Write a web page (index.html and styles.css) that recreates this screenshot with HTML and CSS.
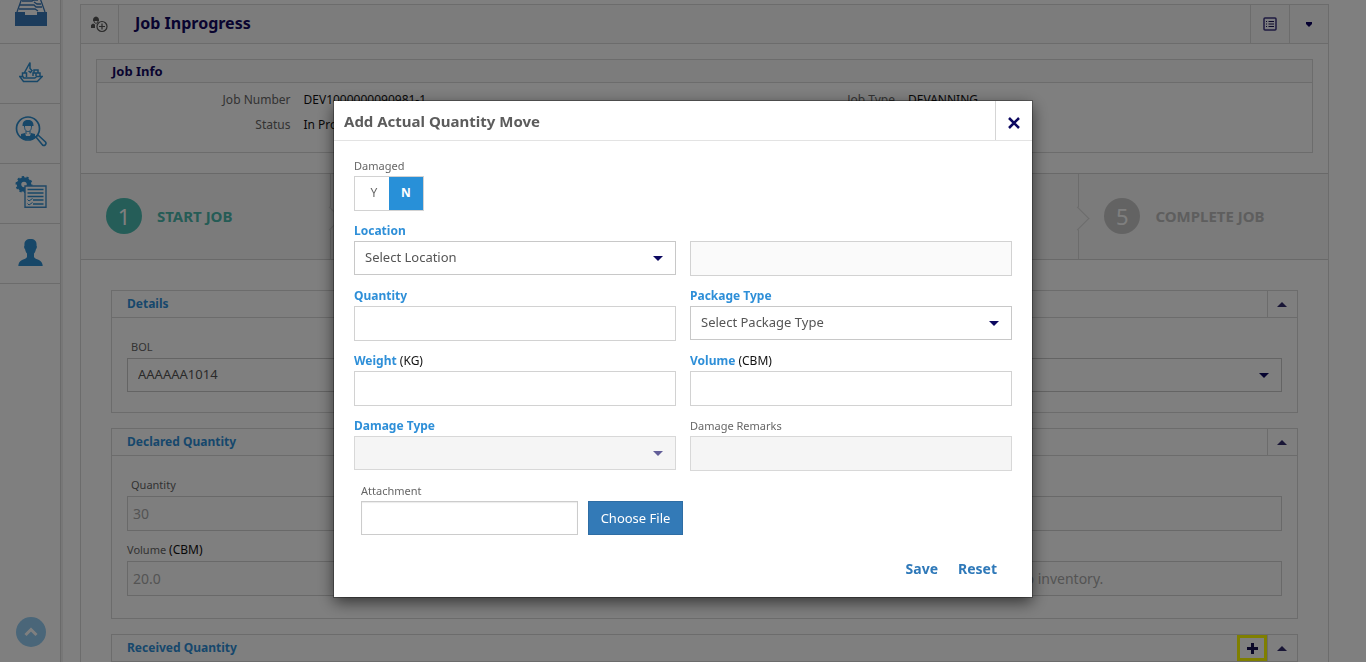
FILE: index.html
```html
<!DOCTYPE html>
<html lang="en">
<head>
<meta charset="utf-8">
<title>Job Inprogress</title>
<link rel="stylesheet" href="styles.css">
</head>
<body>
<div class="app">
  <nav class="sidebar" aria-label="Main">
    <a class="nav-item nav-first" href="#" aria-label="Inbox">
      <svg width="32" height="32" viewBox="0 0 32 32"><g fill="none" stroke="#3878b8" stroke-width="1.3"><path d="M8 3h16M7 7h10l2-1h4M5 11h14l2 2h6M4 15h16l3 2M2 18L7 4M30 18L25 4M19 8l3 2h4"/></g><path fill="#3878b8" d="M0 18h10v3h12v-3h10v14H0z"/></svg>
    </a>
    <a class="nav-item" href="#" aria-label="Vessels">
      <svg width="24" height="22" viewBox="0 0 24 22" fill="none" stroke="#2e8fd0" stroke-width="1.5"><path d="M.8 15.500h3l1 1.500h11l2-1.500h5.500l-5 5H4.500zM3.500 15v-3h4v4M5.500 11.500L11 1.500v6l2 2-1.500 2-2-1.500M14 15v-3h3v3M17 12h4v3M15 12V9h4v3"/></svg>
    </a>
    <a class="nav-item" href="#" aria-label="Find worker">
      <svg width="32" height="32" viewBox="0 0 32 32"><circle cx="13" cy="12.500" r="11.500" fill="none" stroke="#2e8fd0" stroke-width="1.700"/><path d="M21 21l2-2 7.500 7c1.500 2-1 4.500-3 3z" fill="none" stroke="#2e8fd0" stroke-width="1.600"/><path fill="#2e8fd0" d="M7.500 9c0-3 2-4.500 4-5h3c2 .5 4 2 4 5v1h-11zM6 22v-4l4-1 1 3h4l1-3 4 1v4l-3 1.500H9z"/><path d="M9.500 10c0 4 1.500 5.500 3.500 5.500s3.500-1.500 3.500-5.500M11 15v3M15 15v3" fill="none" stroke="#2e8fd0"/></svg>
    </a>
    <a class="nav-item" href="#" aria-label="Job settings">
      <svg width="32" height="32" viewBox="0 0 32 32"><circle cx="9" cy="8.500" r="5" fill="none" stroke="#2e8fd0" stroke-width="4.500"/><circle cx="9" cy="8.500" r="7.500" fill="none" stroke="#2e8fd0" stroke-width="2" stroke-dasharray="2.350 2.350"/><path d="M10 10h21v21.300H10z" fill="#fff" stroke="#3f8fcc" stroke-width="1.400"/><path d="M12.500 13.500h16M12.500 17h16M12.500 20.500h16M18 24h10.500M18 28h10.500" stroke="#2e8fd0" stroke-width="1.300"/><path d="M12.500 23.500l1.500 1.500 3.500-2.500M12.500 27.500L14 29l3.500-2.500" fill="none" stroke="#2e8fd0"/></svg>
    </a>
    <a class="nav-item" href="#" aria-label="Profile">
      <svg width="25" height="27" viewBox="0 0 25 27" fill="#2e8fd0"><path d="M12.500 0C17 0 19 2.500 18.500 6.500c.7.500.4 3-.5 3.500-.5 2.500-1 3.500-2 4.500v3.500c1.500 3 7.500 2 8.500 7.500l.2 1.500H.3l.2-1.500C1.500 20 7.500 21 9 18v-3.500C8 13.500 7.500 12.500 7 10c-.9-.5-1.200-3-.5-3.500C6 2.500 8 0 12.500 0z"/></svg>
    </a>
    <button class="to-top" type="button" aria-label="Back to top">
      <svg width="14" height="10" viewBox="0 0 14 10" fill="none" stroke="#fff" stroke-width="3"><path d="M1.500 8L7 2.500 12.500 8"/></svg>
    </button>
  </nav>

  <main class="page">
    <header class="page-head">
      <span class="page-icon">
        <svg width="17" height="17" viewBox="0 0 17 17"><path fill="#555" d="M2 4c0-2 1-3 3-3.500C7 1 8 2 8 4v1H2zM0 9l2-1.500 2 1v3.500H0z"/><path d="M3 5c0 3 4 3 4 0" fill="none" stroke="#555"/><circle cx="11" cy="10.500" r="5" fill="#f8f8f8" stroke="#555" stroke-width="1.200"/><path d="M11 7.500v6M8 10.500h6" stroke="#555" stroke-width="1.200"/></svg>
      </span>
      <h1>Job Inprogress</h1>
      <button class="head-btn" type="button" aria-label="List view">
        <svg width="14" height="14" viewBox="0 0 14 14"><rect x="1" y="1" width="12" height="12" rx="1" fill="#f7f7ff" stroke="#3c3480" stroke-width="1.500"/><path d="M3 4.500h1M3 7h1M3 9.500h1M5.500 4.500H11M5.500 7H11M5.500 9.500H11" stroke="#191050"/></svg>
      </button>
      <button class="head-btn" type="button" aria-label="More"><svg width="6" height="5" viewBox="0 0 6 5" fill="#0a0060"><path d="M0 0h6v2L3 5 0 2z"/></svg></button>
    </header>

    <section class="job-info">
      <h2>Job Info</h2>
      <dl>
        <dt>Job Number</dt><dd>DEV1000000090981-1</dd>
        <dt>Job Type</dt><dd>DEVANNING</dd>
        <dt>Status</dt><dd>In Progress</dd>
      </dl>
    </section>

    <ol class="steps">
      <li class="step done"><span class="num">1</span>START JOB</li>
      <li class="step"></li>
      <li class="step"></li>
      <li class="step"></li>
      <li class="step"><span class="num">5</span>COMPLETE JOB</li>
    </ol>

    <div class="panels">
      <section class="panel">
        <header><h3>Details</h3><button type="button" aria-label="Collapse"><i class="up"></i></button></header>
        <div class="panel-body">
          <div class="field indent"><label for="bol">BOL</label><span class="pick"><select id="bol"><option>AAAAAA1014</option></select></span></div>
          <div class="field"><span class="label"></span><span class="pick"><select aria-label="Detail"><option></option></select></span></div>
        </div>
      </section>
      <section class="panel">
        <header><h3>Declared Quantity</h3><button type="button" aria-label="Collapse"><i class="up"></i></button></header>
        <div class="panel-body">
          <div class="field indent"><label for="dq">Quantity</label><input id="dq" value="30" disabled></div>
          <div class="field"><span class="label"></span><input aria-label="Weight" disabled></div>
          <div class="field"><label for="dv">Volume <b>(CBM)</b></label><input id="dv" value="20.0" disabled></div>
          <div class="field remarks"><span class="label"></span><input aria-label="Remarks" value="to inventory." disabled></div>
        </div>
      </section>
      <section class="panel">
        <header><h3>Received Quantity</h3><button class="add" type="button" aria-label="Add"><svg width="11" height="11" viewBox="0 0 11 11"><path d="M5.500 0v11M0 5.500h11" stroke="#150f50" stroke-width="3"/></svg></button><button type="button" aria-label="Collapse"><i class="up"></i></button></header>
        <div class="panel-body"></div>
      </section>
    </div>
  </main>
</div>

<div class="backdrop">
  <form class="modal" role="dialog" aria-labelledby="modal-title">
    <header class="modal-head">
      <h2 id="modal-title">Add Actual Quantity Move</h2>
      <button type="button" aria-label="Close"><svg width="12" height="12" viewBox="0 0 12 12"><path d="M1 1l10 10M11 1L1 11" stroke="#0c0860" stroke-width="2.500"/></svg></button>
    </header>
    <div class="modal-body">
      <fieldset class="field wide">
        <legend>Damaged</legend>
        <div class="toggle">
          <label><input type="radio" name="damaged"><span>Y</span></label>
          <label><input type="radio" name="damaged" checked><span>N</span></label>
        </div>
      </fieldset>
      <div class="field req"><label for="loc">Location</label><span class="pick"><select id="loc"><option>Select Location</option></select></span></div>
      <div class="field"><span class="label"></span><input class="readonly" aria-label="Location details" readonly></div>
      <div class="field req"><label for="qty">Quantity</label><input id="qty"></div>
      <div class="field req"><label for="pkg">Package Type</label><span class="pick"><select id="pkg"><option>Select Package Type</option></select></span></div>
      <div class="field req"><label for="wt">Weight <b>(KG)</b></label><input id="wt"></div>
      <div class="field req"><label for="vol">Volume <b>(CBM)</b></label><input id="vol"></div>
      <div class="field req"><label for="dt">Damage Type</label><span class="pick off"><select id="dt" disabled><option></option></select></span></div>
      <div class="field"><label for="dr">Damage Remarks</label><input id="dr" class="off" disabled></div>
      <div class="field wide attach"><label for="att">Attachment</label>
        <div class="file-row"><input id="att"><button type="button">Choose File</button></div>
      </div>
    </div>
    <footer class="modal-foot"><button type="submit">Save</button><button type="reset">Reset</button></footer>
  </form>
</div>
</body>
</html>
```
FILE: styles.css
```css
* { box-sizing: border-box; }
body, h1, h2, h3, dl, dd, ol, fieldset { margin: 0; padding: 0; }
body {
  font: 12px/20px Tahoma, "Noto Sans", sans-serif;
  color: #666;
  background: #fff;
  overflow: hidden;
}
button, input, select { font-family: inherit; margin: 0; border-radius: 0; }
button { padding: 0; border: 0; background: none; display: flex; align-items: center; justify-content: center; }
b { font-size: 12px; font-weight: 400; color: #111; }

.app { display: flex; height: 100vh; overflow: hidden; background: #fff; }

/* Sidebar */
.sidebar {
  flex: 0 0 63px;
  display: flex;
  flex-direction: column;
  align-items: stretch;
  border-right: 2px solid #efefef;
  box-shadow: inset -1px 0 #d4d4d4;
}
.nav-item {
  flex: 0 0 60px;
  display: flex;
  align-items: center;
  justify-content: center;
  padding-bottom: 3px;
  border-bottom: 1px solid #d8d8d8;
}
.nav-first { flex-basis: 44px; align-items: flex-end; padding-bottom: 17px; overflow: hidden; }
.to-top {
  width: 30px;
  height: 30px;
  margin: auto auto 15px;
  border-radius: 50%;
  background: #95cdf2;
}

/* Page */
.page {
  flex: 1;
  margin: 4px 37px 0 17px;
  border: 1px solid #d8d8d8;
  border-bottom: 0;
  display: flex;
  flex-direction: column;
}
.page-head {
  display: flex;
  flex: 0 0 39px;
  background: #f8f8f8;
  border-bottom: 1px solid #d8d8d8;
}
.page-icon { width: 38px; border-right: 1px solid #d8d8d8; display: flex; align-items: center; justify-content: center; }
.page-head h1 { flex: 1; padding-left: 16px; font-size: 16px; line-height: 37px; color: #130860; }
.head-btn { width: 39px; border-left: 1px solid #d8d8d8; }

.job-info { margin: 15px 15px 20px; border: 1px solid #d8d8d8; }
.job-info h2 {
  padding-left: 15px;
  font-size: 13px;
  line-height: 22px;
  color: #130860;
  background: #f8f8f8;
  border-bottom: 1px solid #d8d8d8;
}
.job-info dl {
  display: grid;
  grid-template-columns: 2fr 4fr 2fr 4fr;
  padding: 4px 6px 15px 0;
  line-height: 25px;
}
.job-info dt { text-align: right; padding-right: 8px; }
.job-info dd { padding-left: 5px; color: #111; }

/* Steps */
.steps { display: flex; list-style: none; border: solid #d2d2d2; border-width: 1px 0; background: #f6f6f6; }
.step {
  position: relative;
  flex: 1 1 0;
  display: flex;
  align-items: center;
  gap: 15px;
  height: 85px;
  padding: 0 0 2px 25px;
  border-right: 1px solid #d8d8d8;
  font-size: 15px;
  font-weight: 700;
  color: #bdbdbd;
}
.step:last-child { border-right: 0; }
.step:not(:last-child)::after {
  content: "";
  position: absolute;
  right: -8px;
  top: 36px;
  width: 16px;
  height: 16px;
  transform: rotate(45deg);
  border: solid #d8d8d8;
  border-width: 1px 1px 0 0;
  background: #f6f6f6;
}
.num {
  width: 36px;
  height: 36px;
  border-radius: 50%;
  background: #c6c6c6;
  color: #fff;
  font-size: 22px;
  font-weight: 400;
  line-height: 36px;
  text-align: center;
}
.done { color: #4ab8ac; }
.done .num { background: #4abbb0; }

/* Panels */
.panels { padding: 30px; display: flex; flex-direction: column; gap: 15px; }
.panel { border: 1px solid #d8d8d8; }
.panel > header { display: flex; height: 27px; border-bottom: 1px solid #d8d8d8; }
.panel h3 { flex: 1; padding-left: 15px; font-size: 12px; line-height: 25px; color: #2e8fd8; }
.panel header button { width: 30px; padding-right: 2px; border-left: 1px solid #d8d8d8; }
.panel header .add { padding: 0; border: 3px solid #ff0; }
.up { border: solid transparent; border-width: 0 5px 5px; border-bottom-color: #332c6c; }
.panel-body { display: grid; grid-template-columns: 1fr 1fr; gap: 10px 14px; padding: 20px 15px; }
.panel .indent label { padding-left: 4px; }
.panel .remarks { margin-bottom: 2px; }
.panel .remarks input:not([type]) { padding-left: 308px; }

/* Fields */
.field { min-width: 0; border: 0; }
.field > label, .field > .label, legend { display: block; height: 20px; padding: 0; font-size: 11px; line-height: 19px; }
.panel .field > label { line-height: 17px; }
.field.req > label { font-size: 12px; font-weight: 700; color: #2e8fd8; }
.field input:not([type]) {
  display: block;
  width: 100%;
  height: 35px;
  padding: 0 5px;
  border: 1px solid #d2d2d2;
  background: #fff;
  font-size: 14px;
  color: #555;
}
.panel input:not([type]):disabled { color: #a8a8a8; background: #fdfdfd; }
.pick { display: block; position: relative; }
.pick::after {
  content: "";
  position: absolute;
  right: 13px;
  top: 15px;
  border: solid transparent;
  border-width: 5px 5px 0;
  border-top-color: #0c0860;
}
.pick select {
  appearance: none;
  display: block;
  width: 100%;
  height: 34px;
  padding: 0 30px 2px 10px;
  border: 1px solid #c8c8c8;
  background: #fff;
  font-size: 13px;
  color: #555;
}
.field input.readonly:not([type]) { background: #fafafa; }
.field input.off:not([type]), .off select:disabled { background: #f5f5f5; border-color: #d8d8d8; opacity: 1; }
.off.pick::after { border-top-color: #625e98; }

/* Modal */
.backdrop {
  position: fixed;
  inset: 0;
  display: flex;
  justify-content: center;
  align-items: flex-start;
  padding-top: 101px;
  background: rgba(0, 0, 0, .5);
}
.modal {
  width: 100%;
  max-width: 698px;
  background: #fff;
  box-shadow: 0 0 0 1px rgba(0, 0, 0, .3), 0 5px 15px rgba(0, 0, 0, .6);
}
.modal-head { display: flex; height: 40px; border-bottom: 1px solid #e3e3e3; }
.modal-head h2 { flex: 1; padding-left: 10px; font-size: 15px; line-height: 40px; color: #5c5c5c; }
.modal-head button { width: 37px; padding-top: 4px; border-left: 1px solid #d5d5d5; }
.modal-body { display: grid; grid-template-columns: 1fr 1fr; gap: 10px 14px; padding: 15px 20px 14px; }
.wide { grid-column: 1 / -1; }
.toggle { display: flex; width: 70px; height: 35px; border: 1px solid #d2d2d2; }
.toggle label { flex: 1; display: flex; position: relative; }
.toggle input { position: absolute; inset: 0; margin: 0; opacity: 0; }
.toggle span { flex: 1; text-align: center; line-height: 31px; padding-left: 4px; }
.toggle input:checked + span { background: #2890d8; color: #fff; font-weight: 700; padding-left: 0; }
.attach { padding-left: 7px; }
.file-row { display: flex; gap: 10px; }
.file-row input:not([type]) { width: 217px; height: 34px; border-color: #ccc; box-shadow: inset 0 1px 1px rgba(0, 0, 0, .08); }
.file-row button { width: 95px; height: 34px; border: 1px solid #2e6da4; background: #337ab7; color: #fff; font-size: 13px; }
.modal-foot { display: flex; justify-content: flex-end; gap: 20px; padding: 10px 35px 18px; }
.modal-foot button { font-size: 14px; line-height: 20px; font-weight: 700; color: #2f79b9; }
```
